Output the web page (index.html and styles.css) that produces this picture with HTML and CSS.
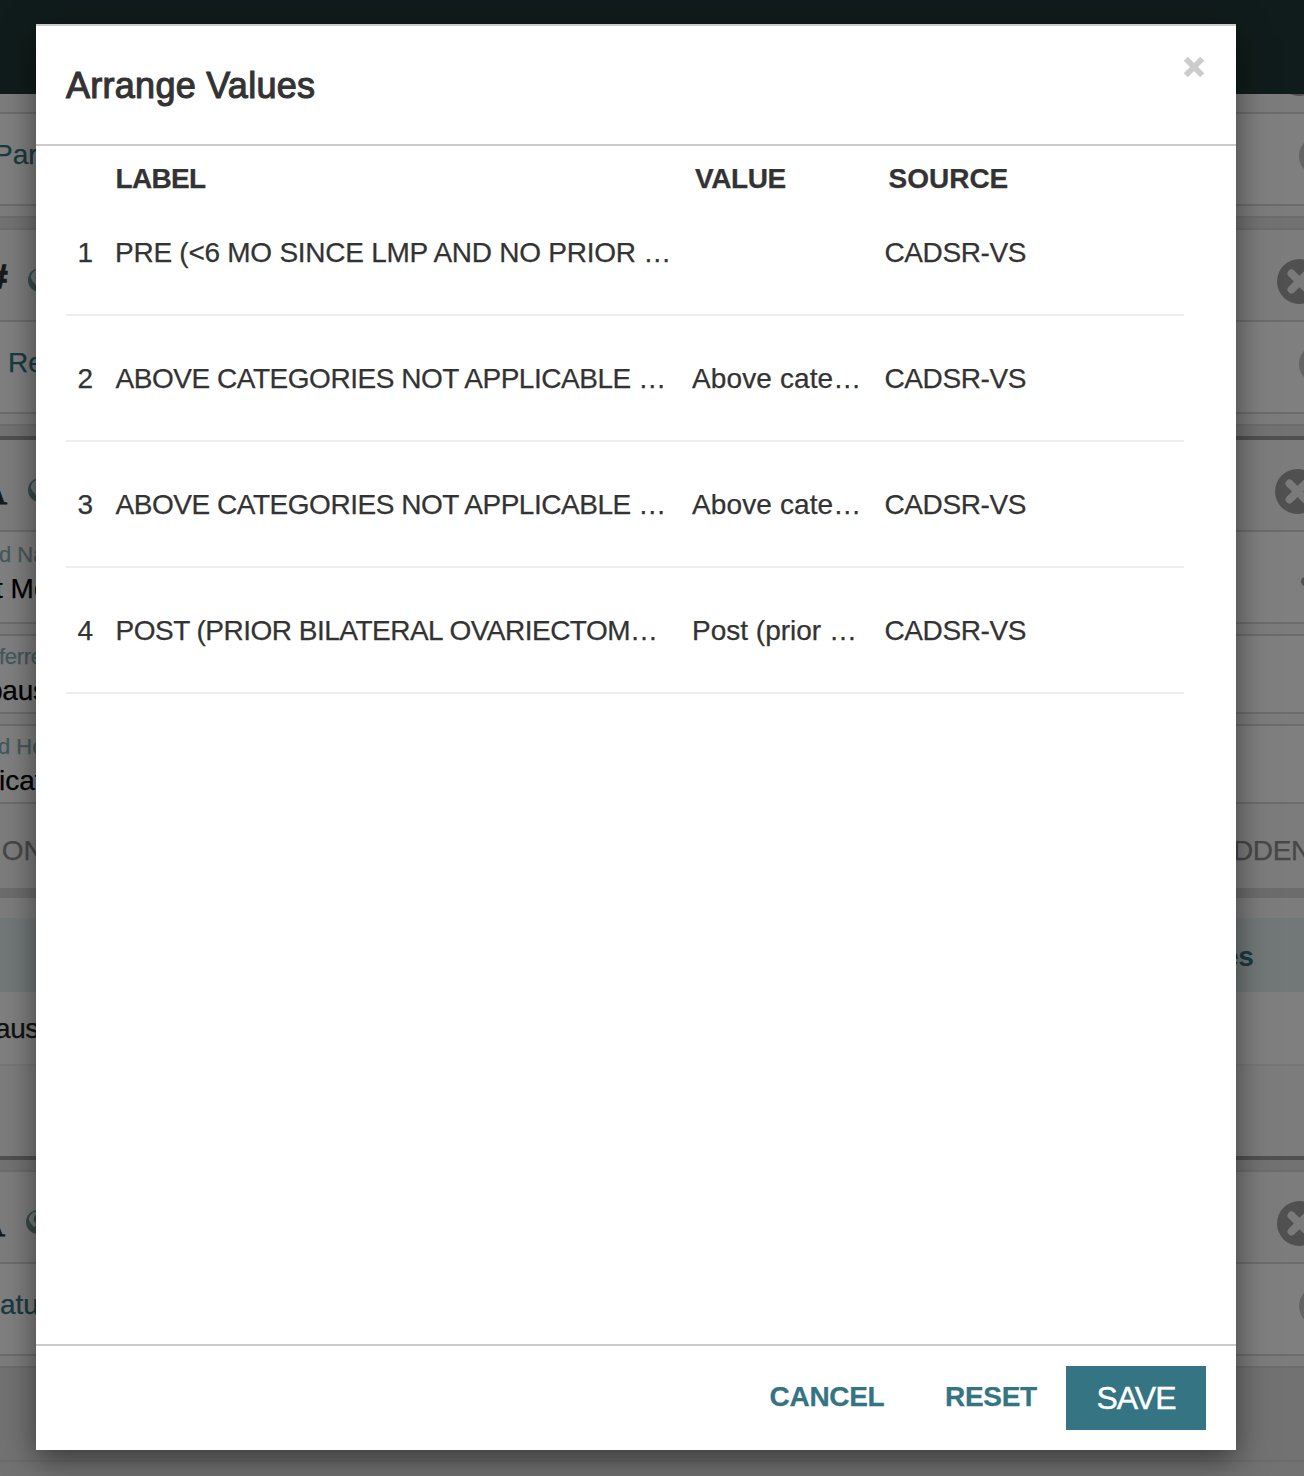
FILE: index.html
```html
<!DOCTYPE html>
<html lang="en">
<head>
<meta charset="utf-8">
<title>Arrange Values</title>
<link rel="stylesheet" href="styles.css">
</head>
<body>
<svg width="0" height="0" class="defs" aria-hidden="true">
  <symbol id="globe" viewBox="0 0 24 24"><circle cx="12" cy="12" r="12" fill="#6c9796"/><path d="M8 2 Q3 4.500 2.800 9.500 L4.500 13 L8 17 L11 15 L7.500 10 L8.500 6 L12 3Z" fill="#e8eeee"/></symbol>
  <symbol id="remove" viewBox="0 0 45 45"><circle cx="22.5" cy="22.5" r="22.5" fill="#a0a0a0"/><path d="M14.500 14.500 L30.500 30.500 M30.500 14.500 L14.500 30.500" stroke="#f4f4f4" stroke-width="8" stroke-linecap="round"/></symbol>
</svg>
<main class="page">
  <div class="topbar"></div>
  <div class="row h18 soft"><span></span><span></span><div class="tail"><svg class="remove above"><use href="#remove"/></svg></div></div>
  <div class="row h92 line"><span class="link par">Par</span><span></span><div class="tail"><i class="radio"></i></div></div>
  <div class="row h12 line soft"></div>
  <div class="row h12 line gap"></div>
  <div class="row h92 line soft"><div class="type"><b class="hash">#</b><svg class="globe"><use href="#globe"/></svg></div><span></span><div class="tail"><svg class="remove"><use href="#remove"/></svg></div></div>
  <div class="row h92 line"><span class="link re">Re</span><span></span><div class="tail"><i class="radio"></i></div></div>
  <div class="row h12 line soft"></div>
  <div class="row h12 line gap"></div>
  <div class="row h94 dark soft"><div class="type"><b class="alpha">A</b><svg class="globe"><use href="#globe"/></svg></div><span></span><div class="tail"><svg class="remove shifted"><use href="#remove"/></svg></div></div>
  <div class="row h92 line"><div class="field first"><small>d Na</small><span>t Me</span></div><span></span><div class="tail"><i class="dot"></i></div></div>
  <div class="row h12 line soft"></div>
  <div class="row h78 line"><div class="field second"><small>ferre</small><span>paus</span></div></div>
  <div class="row h12 line soft"></div>
  <div class="row h78 line"><div class="field third"><small>d He</small><span>icat</span></div></div>
  <div class="row h86 line soft"><span class="tab ion">ION</span><span></span><div class="tail"><span class="tab hidden-tab">DDEN</span></div></div>
  <div class="band"></div>
  <div class="row h20 soft"></div>
  <div class="row h74 tint"><span></span><span></span><div class="tail"><b class="es">es</b></div></div>
  <div class="row h72"><span class="aus">aus</span></div>
  <div class="row h92 faint soft"></div>
  <div class="row h14 dark gap"></div>
  <div class="row h92 line soft"><div class="type last"><b class="alpha">A</b><svg class="globe"><use href="#globe"/></svg></div><span></span><div class="tail"><svg class="remove"><use href="#remove"/></svg></div></div>
  <div class="row h92 line"><span class="link atu">atu</span><span></span><div class="tail"><i class="radio"></i></div></div>
  <div class="row h12 line soft"></div>
  <div class="row h94 line gap"></div>
  <div class="row rest line gap"></div>
</main>
<div class="backdrop">
  <section class="modal" role="dialog" aria-labelledby="title">
    <header class="modal-header">
      <h1 id="title">Arrange Values</h1>
      <button class="close" aria-label="Close"><svg width="22" height="22" viewBox="0 0 22 22"><path d="M2.800 2.800 L19.200 19.200 M19.200 2.800 L2.800 19.200" stroke="#ccc" stroke-width="5.800"/></svg></button>
    </header>
    <div class="modal-body">
      <div class="grid head"><span></span><span class="h-label">LABEL</span><span class="h-value">VALUE</span><span class="h-source">SOURCE</span></div>
      <div class="grid item"><span>1</span><span class="pre">PRE (&lt;6 MO SINCE LMP AND NO PRIOR …</span><span></span><span class="source">CADSR-VS</span></div>
      <div class="grid item"><span>2</span><span class="above-cat">ABOVE CATEGORIES NOT APPLICABLE …</span><span class="value">Above cate…</span><span class="source">CADSR-VS</span></div>
      <div class="grid item"><span>3</span><span class="above-cat">ABOVE CATEGORIES NOT APPLICABLE …</span><span class="value">Above cate…</span><span class="source">CADSR-VS</span></div>
      <div class="grid item"><span>4</span><span class="post">POST (PRIOR BILATERAL OVARIECTOM…</span><span>Post (prior …</span><span class="source">CADSR-VS</span></div>
    </div>
    <footer class="modal-footer">
      <button class="text-btn cancel">CANCEL</button>
      <button class="text-btn reset">RESET</button>
      <button class="save">SAVE</button>
    </footer>
  </section>
</div>
</body>
</html>
```
FILE: styles.css
```css
* { box-sizing: border-box; }
body {
  margin: 0;
  height: 1476px;
  overflow: hidden;
  position: relative;
  font: 28px/32px "Liberation Sans", Arial, sans-serif;
  color: #333;
  -webkit-text-stroke: .25px;
}
.defs { position: absolute; }
button { font: inherit; border: 0; padding: 0; background: none; }

/* Form editor behind the dialog */
.page { height: 1476px; display: flex; flex-direction: column; background: #fff; }
.topbar { height: 94px; background: #203836; flex: none; }
.row {
  display: grid;
  grid-template-columns: 36px 1fr 68px;
  align-items: start;
  overflow: hidden;
  white-space: nowrap;
  flex: none;
  background: #fff;
}
.tail { overflow: hidden; display: flex; height: 100%; }
.line { border-top: 2px solid #d8d8d8; }
.dark { border-top: 4px solid #a0a0a0; }
.faint { border-top: 2px solid #e6eeee; }
.soft { background: #f8f8f8; }
.gap { background: #e4e4e4; }
.tint { background: #e4eeef; }
.band { height: 10px; background: #d8d8d8; flex: none; }
.h12 { height: 12px; }
.h14 { height: 14px; }
.h18 { height: 18px; }
.h20 { height: 20px; }
.h72 { height: 72px; }
.h74 { height: 74px; }
.h78 { height: 78px; }
.h86 { height: 86px; }
.h92 { height: 92px; }
.h94 { height: 94px; }
.rest { flex: 1; }

.page { -webkit-text-stroke: 0; }
.link { color: #347483; margin-top: 25px; -webkit-text-stroke: .25px #347483; }
.par { margin-left: -6px; }
.re { margin-left: 8px; }
.type { display: flex; height: 90px; }
.hash { font-size: 34px; font-style: italic; color: #333; margin: 30px 0 0 -12px; width: 40px; flex: none; -webkit-text-stroke: 1.5px #333; }
.alpha { font: 36px/40px "Liberation Serif", serif; color: #333; margin: 32px 0 0 -19px; width: 47px; flex: none; -webkit-text-stroke: 1px #333; }
.last .alpha { margin-left: -21px; }
.globe { width: 24px; height: 24px; margin-top: 38px; flex: none; }
.remove { width: 45px; height: 45px; margin: 29px 0 0 41px; flex: none; }
.remove.shifted { margin-left: 39px; }
.remove.above { margin-top: -43px; }
.radio { width: 40px; height: 40px; border-radius: 50%; background: #c8c8c8; margin: 22px 0 0 63px; flex: none; }
.dot { width: 9px; height: 9px; border-radius: 50%; background: #a0a0a0; margin: 45px 0 0 65px; flex: none; }
.field { display: flex; flex-direction: column; color: #000; -webkit-text-stroke: .25px #000; }
.field small { font-size: 22px; line-height: 26px; color: #8ab0b6; -webkit-text-stroke: .25px #8ab0b6; }
.first small { margin: 10px 0 0 -1px; }
.first span { margin: 5px 0 0 -5px; }
.second small { margin: 8px 0 0 -1px; letter-spacing: -.3px; }
.second span { margin: 5px 0 0 -13px; letter-spacing: -.2px; }
.third small { margin: 8px 0 0 -2px; }
.third span { margin: 5px 0 0 -1px; }
.tab { color: #8f8f8f; margin-top: 31px; -webkit-text-stroke: .25px #8f8f8f; }
.ion { margin-left: -6px; }
.hidden-tab { margin-left: -3px; letter-spacing: -.4px; }
.es { color: #347483; margin: 23px 0 0 -13px; letter-spacing: -.3px; }
.aus { color: #222; margin: 21px 0 0 -5px; letter-spacing: -.4px; -webkit-text-stroke: .25px #222; }

/* Dialog */
.backdrop { position: absolute; inset: 0; padding: 24px 68px 26px 36px; background: rgba(0, 0, 0, .5); }
.modal {
  height: 1426px;
  display: flex;
  flex-direction: column;
  background: #fff;
  border-top: 2px solid #ccc;
  box-shadow: 0 10px 30px rgba(0, 0, 0, .5);
}
.modal-header { height: 120px; padding: 30px 31.500px 0 30px; display: flex; justify-content: space-between; align-items: flex-start; border-bottom: 2px solid #ccc; }
h1 { margin: 6px 0 0; font-size: 36px; line-height: 48px; font-weight: 400; letter-spacing: .27px; -webkit-text-stroke: 1.1px #333; }
.close { width: 22px; height: 22px; display: flex; }
.modal-body { flex: 1; padding: 0 52px 0 30px; }
.grid { display: grid; grid-template-columns: 37px 577.500px 192px 1fr; padding-left: 11.500px; white-space: nowrap; }
.head { height: 44px; padding-top: 17px; font-weight: 700; }
.h-label { padding-left: 1px; letter-spacing: -.7px; }
.h-value { padding-left: 3px; letter-spacing: -.4px; }
.h-source { padding-left: 4.500px; }
.item { height: 126px; padding-top: 47px; border-bottom: 2px solid #eee; }
.pre { padding-left: .5px; letter-spacing: -.26px; }
.above-cat { padding-left: 1px; letter-spacing: -.46px; }
.post { padding-left: 1px; letter-spacing: -.5px; }
.value { letter-spacing: .12px; }
.source { padding-left: .5px; letter-spacing: -.4px; }
.modal-footer { height: 106px; border-top: 2px solid #ccc; padding: 20px 30px; display: flex; justify-content: flex-end; }
.text-btn { height: 62px; font-weight: 700; color: #347483; letter-spacing: -.3px; }
.cancel { width: 118px; margin-right: 59px; }
.reset { width: 92px; margin-right: 29px; }
.save { width: 140px; height: 64px; font-size: 32px; color: #fff; background: #347483; letter-spacing: -1px; -webkit-text-stroke: .4px #fff; }
```
